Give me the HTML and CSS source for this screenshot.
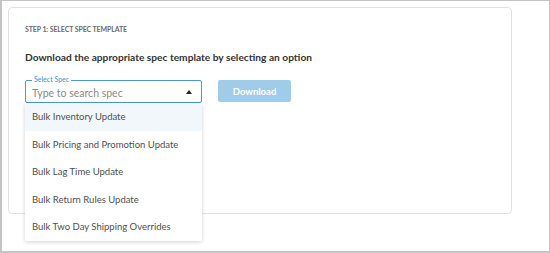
FILE: index.html
```html
<!DOCTYPE html>
<html lang="en">
<head>
    <meta charset="UTF-8">
    <title>Select Spec Template</title>
    <link rel="stylesheet" href="styles.css">
</head>
<body>
    <div class="frame">
        <section class="card">
            <h2 class="step-title">STEP 1: SELECT SPEC TEMPLATE</h2>
            <p class="intro">Download the appropriate spec template by selecting an option</p>

            <div class="controls">
                <div class="spec-select">
                    <span class="spec-label">Select Spec</span>
                    <input type="text" class="spec-input" placeholder="Type to search spec">
                    <span class="spec-arrow"></span>

                    <ul class="spec-menu">
                        <li class="active">Bulk Inventory Update</li>
                        <li>Bulk Pricing and Promotion Update</li>
                        <li>Bulk Lag Time Update</li>
                        <li>Bulk Return Rules Update</li>
                        <li>Bulk Two Day Shipping Overrides</li>
                    </ul>
                </div>
                <button class="download-btn" disabled>Download</button>
            </div>
        </section>
    </div>
</body>
</html>
```

FILE: styles.css
```css
* {
    box-sizing: border-box;
}

body {
    margin: 0;
    font-family: 'Lato', sans-serif;
    background: #fff;
}

.frame {
    width: 550px;
    height: 253px;
    border: 1px solid #c4c4c4;
    border-left-width: 2px;
    border-bottom-width: 2px;
    padding: 6px 37px 0 6px;
}

.card {
    height: 207px;
    border: 1px solid #e2e2e2;
    border-radius: 4px;
    padding: 17px 16px 0 16px;
}

.step-title {
    margin: 0;
    font-size: 7px;
    font-weight: 700;
    color: #6b6b6b;
    letter-spacing: -0.1px;
}

.intro {
    margin: 18px 0 0 0;
    font-size: 10.2px;
    font-weight: 700;
    color: #333;
}

.controls {
    display: flex;
    gap: 16px;
    margin-top: 17px;
}

.spec-select {
    position: relative;
    width: 177px;
    height: 23px;
    border: 1px solid #4a9ad4;
    border-radius: 2px;
}

.spec-label {
    position: absolute;
    top: -6px;
    left: 6px;
    padding: 0 2px;
    background: #fff;
    font-size: 7px;
    line-height: 9px;
    color: #3d8fcf;
}

.spec-input {
    width: 100%;
    height: 100%;
    border: none;
    outline: none;
    padding: 2px 20px 0 6px;
    font-family: 'Lato', sans-serif;
    font-size: 10.5px;
    color: #333;
    background: transparent;
}

.spec-input::placeholder {
    color: #8a8a8a;
}

.spec-arrow {
    position: absolute;
    right: 9px;
    top: 9px;
    width: 0;
    height: 0;
    border-left: 3px solid transparent;
    border-right: 3px solid transparent;
    border-bottom: 4px solid #222;
}

.spec-menu {
    position: absolute;
    top: 22px;
    left: -1px;
    width: 177px;
    margin: 0;
    padding: 0;
    list-style: none;
    background: #fff;
    border-radius: 2px;
    box-shadow: 0 1px 4px rgba(0, 0, 0, 0.18);
    z-index: 5;
}

.spec-menu li {
    height: 27.5px;
    line-height: 27.5px;
    padding-left: 7px;
    font-size: 9.5px;
    color: #4f4f4f;
}

.spec-menu li.active {
    background: #f2f7fc;
}

.download-btn {
    width: 73px;
    height: 22px;
    border: none;
    border-radius: 2px;
    background: #9fcde9;
    color: #fff;
    font-family: 'Lato', sans-serif;
    font-size: 9.5px;
    font-weight: 700;
}
```
